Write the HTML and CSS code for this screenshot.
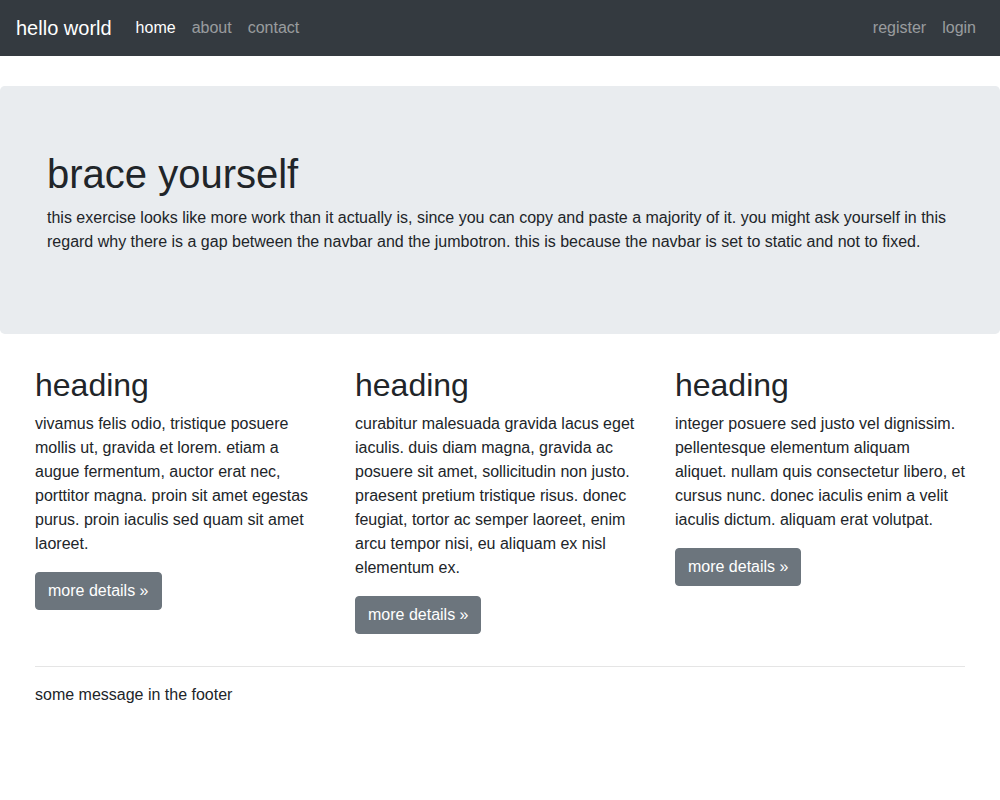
FILE: index.html
```html
<!DOCTYPE html>
<html lang="en">
<head>
<meta charset="utf-8">
<title>hello world</title>
<link rel="stylesheet" href="styles.css">
</head>
<body>
<nav class="navbar">
  <a class="brand" href="#">hello world</a>
  <ul class="nav">
    <li><a class="nav-link active" href="#">home</a></li>
    <li><a class="nav-link" href="#">about</a></li>
    <li><a class="nav-link" href="#">contact</a></li>
  </ul>
  <ul class="nav nav-right">
    <li><a class="nav-link" href="#">register</a></li>
    <li><a class="nav-link" href="#">login</a></li>
  </ul>
</nav>
<main>
  <div class="jumbotron">
    <div class="container">
      <h1>brace yourself</h1>
      <p>this exercise looks like more work than it actually is, since you can copy and paste a majority of it. you might ask yourself in this regard why there is a gap between the navbar and the jumbotron. this is because the navbar is set to static and not to fixed.</p>
    </div>
  </div>
  <div class="container">
    <div class="row">
      <div class="col">
        <h2>heading</h2>
        <p>vivamus felis odio, tristique posuere mollis ut, gravida et lorem. etiam a augue fermentum, auctor erat nec, porttitor magna. proin sit amet egestas purus. proin iaculis sed quam sit amet laoreet.</p>
        <p><a class="btn" href="#">more details &raquo;</a></p>
      </div>
      <div class="col">
        <h2>heading</h2>
        <p>curabitur malesuada gravida lacus eget iaculis. duis diam magna, gravida ac posuere sit amet, sollicitudin non justo. praesent pretium tristique risus. donec feugiat, tortor ac semper laoreet, enim arcu tempor nisi, eu aliquam ex nisl elementum ex.</p>
        <p><a class="btn" href="#">more details &raquo;</a></p>
      </div>
      <div class="col">
        <h2>heading</h2>
        <p>integer posuere sed justo vel dignissim. pellentesque elementum aliquam aliquet. nullam quis consectetur libero, et cursus nunc. donec iaculis enim a velit iaculis dictum. aliquam erat volutpat.</p>
        <p><a class="btn" href="#">more details &raquo;</a></p>
      </div>
    </div>
    <hr>
  </div>
</main>
<footer class="container">
  <p>some message in the footer</p>
</footer>
</body>
</html>
```
FILE: styles.css
```css
* { box-sizing: border-box; }
html, body { margin: 0; padding: 0; }
body {
  font-family: "Liberation Sans", Arial, sans-serif;
  font-size: 16px;
  line-height: 1.5;
  color: #212529;
  background: #fff;
}
a { text-decoration: none; }
p { margin: 0 0 16px; }
h1, h2 { margin: 0 0 8px; font-weight: 500; line-height: 1.2; }
h1 { font-size: 40px; }
h2 { font-size: 32px; }

.navbar {
  display: flex;
  align-items: center;
  background: #343a40;
  padding: 8px 16px;
  height: 56px;
}
.brand {
  color: #fff;
  font-size: 20px;
  line-height: 30px;
  padding: 5px 0;
  margin-right: 16px;
}
.nav {
  display: flex;
  list-style: none;
  margin: 0;
  padding: 0;
}
.nav-right { margin-left: auto; }
.nav-link {
  display: block;
  padding: 8px;
  color: rgba(255, 255, 255, 0.5);
  line-height: 24px;
}
.nav-link.active { color: #fff; }

.jumbotron {
  margin-top: 30px;
  margin-bottom: 32px;
  padding: 64px 32px;
  background: #e9ecef;
  border-radius: 4.8px;
}
.container {
  width: 100%;
  max-width: 960px;
  margin: 0 auto;
  padding: 0 15px;
}
.row {
  display: flex;
  margin: 0 -15px;
}
.col {
  flex: 0 0 33.3333%;
  max-width: 33.3333%;
  padding: 0 15px;
}
.btn {
  display: inline-block;
  background: #6c757d;
  color: #fff;
  padding: 6px 12px;
  line-height: 24px;
  border: 1px solid #6c757d;
  border-radius: 4px;
}
hr {
  margin: 16px 0;
  border: 0;
  border-top: 1px solid rgba(0, 0, 0, 0.1);
  height: 0;
}
```
